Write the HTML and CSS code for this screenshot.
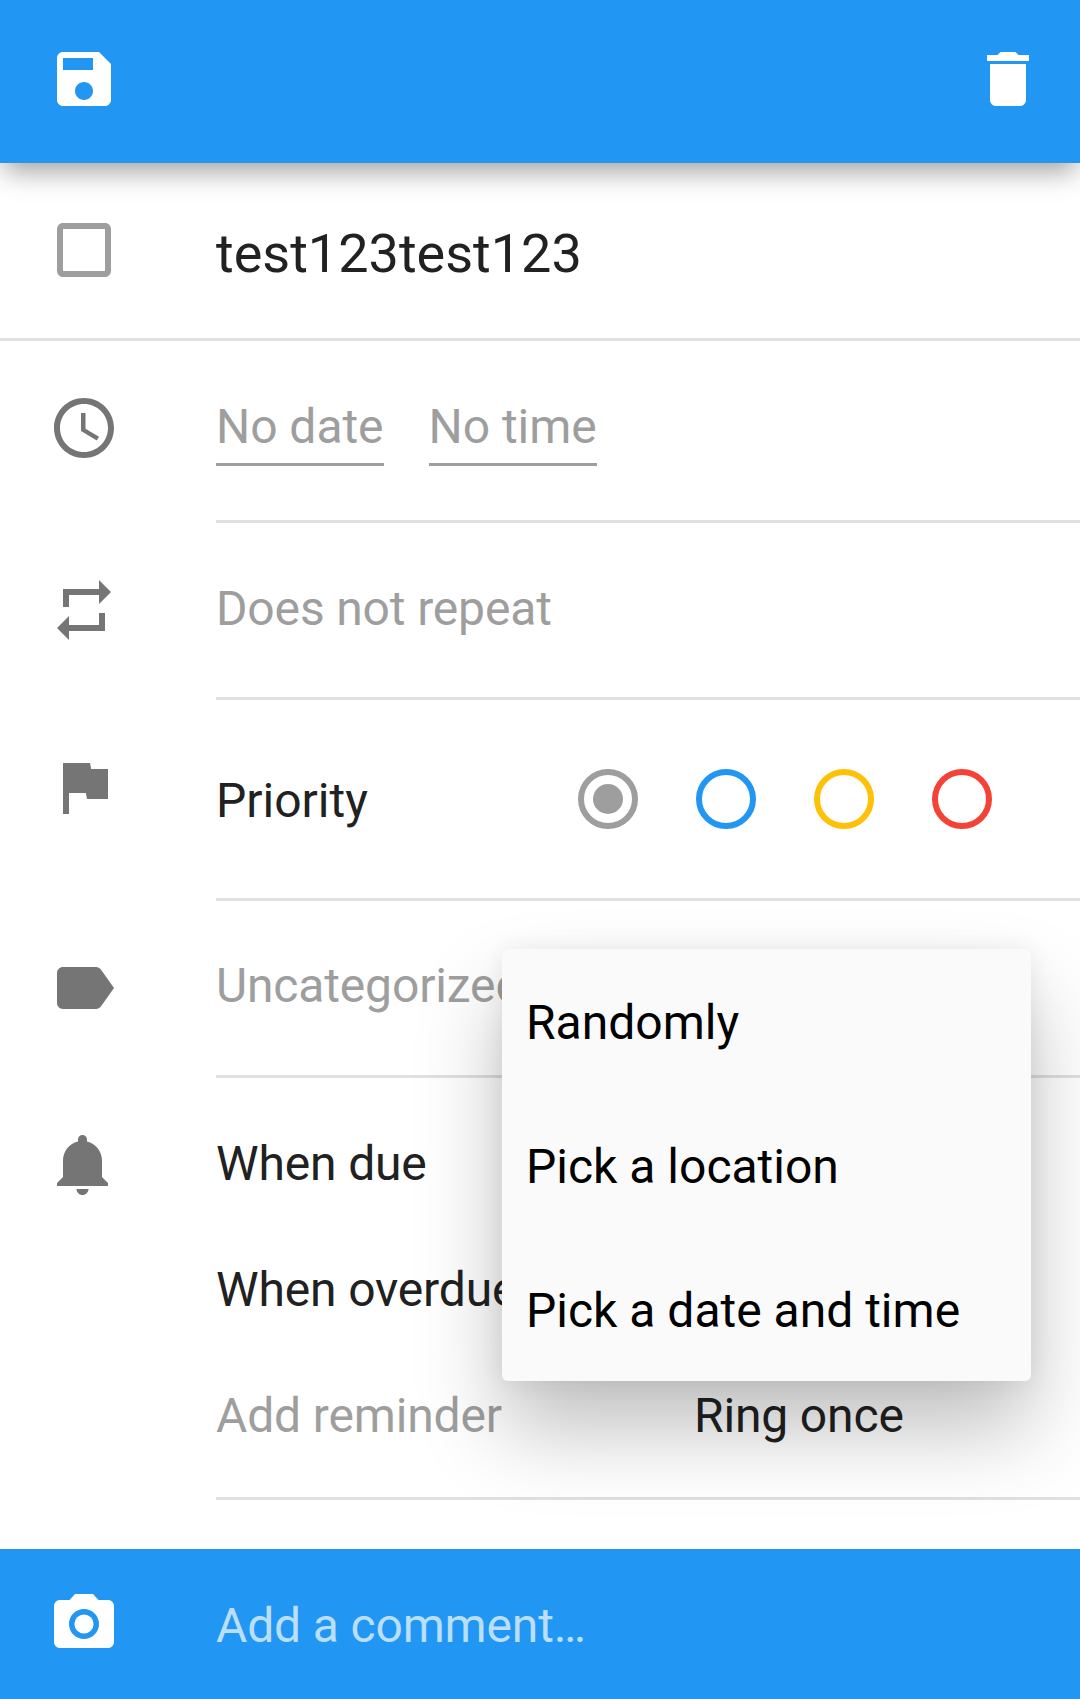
FILE: index.html
```html
<!DOCTYPE html>
<html lang="en">
<head>
  <meta charset="UTF-8">
  <meta name="viewport" content="width=device-width, initial-scale=1.0">
  <title>Edit Task</title>
  <link rel="stylesheet" href="styles.css">
</head>
<body>
  <div class="screen">
    <header class="toolbar">
      <svg class="icon" viewBox="0 0 24 24"><path d="M17 3H5c-1.11 0-2 .9-2 2v14c0 1.1.89 2 2 2h14c1.1 0 2-.9 2-2V7l-4-4zm-5 16c-1.66 0-3-1.34-3-3s1.34-3 3-3 3 1.34 3 3-1.34 3-3 3zm3-10H5V5h10v4z"/></svg>
      <svg class="icon" viewBox="0 0 24 24"><path d="M6 19c0 1.1.9 2 2 2h8c1.1 0 2-.9 2-2V7H6v12zM19 4h-3.5l-1-1h-5l-1 1H5v2h14V4z"/></svg>
    </header>

    <main class="details">
      <section class="row row-title">
        <div class="row-icon">
          <svg class="icon icon-check" viewBox="0 0 24 24"><path d="M19 5v14H5V5h14m0-2H5c-1.1 0-2 .9-2 2v14c0 1.1.9 2 2 2h14c1.1 0 2-.9 2-2V5c0-1.1-.9-2-2-2z"/></svg>
        </div>
        <div class="row-body title-text">test123test123</div>
      </section>

      <section class="row row-date">
        <div class="row-icon">
          <svg class="icon" viewBox="0 0 24 24"><path d="M11.99 2C6.47 2 2 6.48 2 12s4.47 10 9.99 10C17.52 22 22 17.52 22 12S17.52 2 11.99 2zM12 20c-4.42 0-8-3.58-8-8s3.58-8 8-8 8 3.58 8 8-3.58 8-8 8zm.5-13H11v6l5.25 3.15.75-1.23-4.5-2.67z"/></svg>
        </div>
        <div class="row-body date-fields">
          <span class="date-field">No date</span>
          <span class="date-field">No time</span>
        </div>
      </section>

      <section class="row row-repeat">
        <div class="row-icon">
          <svg class="icon" viewBox="0 0 24 24"><path d="M7 7h10v3l4-4-4-4v3H5v6h2V7zm10 10H7v-3l-4 4 4 4v-3h12v-6h-2v4z"/></svg>
        </div>
        <div class="row-body hint">Does not repeat</div>
      </section>

      <section class="row row-priority">
        <div class="row-icon">
          <svg class="icon" viewBox="0 0 24 24"><path d="M14.4 6L14 4H5v17h2v-7h5.6l.4 2h7V6z"/></svg>
        </div>
        <div class="row-body priority">
          <span class="priority-label">Priority</span>
          <div class="priority-options">
            <span class="radio radio-none"></span>
            <span class="radio radio-low"></span>
            <span class="radio radio-medium"></span>
            <span class="radio radio-high"></span>
          </div>
        </div>
      </section>

      <section class="row row-tags">
        <div class="row-icon">
          <svg class="icon" viewBox="0 0 24 24"><path d="M17.63 5.84C17.27 5.33 16.67 5 16 5L5 5.01C3.9 5.01 3 5.9 3 7v10c0 1.1.9 1.99 2 1.99L16 19c.67 0 1.27-.33 1.63-.84L22 12l-4.37-6.16z"/></svg>
        </div>
        <div class="row-body hint">Uncategorized</div>
      </section>

      <section class="row row-reminders">
        <div class="row-icon">
          <svg class="icon" viewBox="0 0 24 24"><path d="M11.5 22c1.1 0 2-.9 2-2h-4c0 1.1.9 2 2 2zm6.5-6v-5.5c0-3.07-2.13-5.64-5-6.32V3.5c0-.83-.67-1.5-1.5-1.5S10 2.67 10 3.5v.68c-2.87.68-5 3.25-5 6.32V16l-2 2v1h17v-1l-2-2z"/></svg>
        </div>
        <div class="row-body reminders">
          <div class="reminder">When due</div>
          <div class="reminder">When overdue</div>
          <div class="reminder">
            <span class="reminder-add hint">Add reminder</span>
            <span>Ring once</span>
          </div>
        </div>
      </section>

      <ul class="menu">
        <li>Randomly</li>
        <li>Pick a location</li>
        <li>Pick a date and time</li>
      </ul>
    </main>

    <footer class="comment-bar">
      <div class="row-icon">
        <svg class="icon" viewBox="0 0 24 24"><path d="M9 2L7.17 4H4c-1.1 0-2 .9-2 2v12c0 1.1.9 2 2 2h16c1.1 0 2-.9 2-2V6c0-1.1-.9-2-2-2h-3.17L15 2H9zm3 15c-2.76 0-5-2.24-5-5s2.24-5 5-5 5 2.24 5 5-2.24 5-5 5z"/><circle cx="12" cy="12" r="3.2"/></svg>
      </div>
      <span class="comment-hint">Add a comment…</span>
    </footer>
  </div>
</body>
</html>
```

FILE: styles.css
```css
* {
  box-sizing: border-box;
}
body {
  margin: 0;
  background-color: #fff;
  color: #212121;
  font-family: Roboto, sans-serif;
  font-size: 48px;
  letter-spacing: -0.15px;
}
.screen {
  display: flex;
  flex-direction: column;
  height: 1699px;
  overflow: hidden;
}
.icon {
  display: block;
  width: 72px;
  height: 72px;
  fill: #757575;
}
.toolbar {
  position: relative;
  z-index: 2;
  display: flex;
  justify-content: space-between;
  height: 163px;
  padding: 43px 36px 0 48px;
  background-color: #2196f3;
  box-shadow: 0 12px 26px -4px rgba(0, 0, 0, 0.38);
}
.toolbar .icon {
  fill: #fff;
}
.details {
  position: relative;
  flex: 1;
}
.row {
  display: flex;
}
.row-icon {
  flex: none;
  width: 216px;
  padding: 51px 0 0 48px;
}
.row-body {
  flex: 1;
  display: flex;
  align-items: flex-start;
  padding-top: 57px;
  border-bottom: 3px solid #e0e0e0;
}
.hint {
  color: #9e9e9e;
}

/* rows */
.row-title {
  height: 178px;
  border-bottom: 3px solid #e0e0e0;
}
.row-title .row-body {
  padding-top: 59px;
  border-bottom: none;
}
.icon-check {
  fill: #9e9e9e;
}
.title-text {
  font-size: 54px;
  letter-spacing: 0;
}
.row-date {
  height: 182px;
}
.date-fields {
  gap: 45px;
}
.date-field {
  padding-bottom: 8px;
  color: #9e9e9e;
  border-bottom: 3px solid #9e9e9e;
  letter-spacing: -0.05px;
}
.row-repeat {
  height: 177px;
}
.row-priority {
  height: 201px;
}
.priority {
  justify-content: space-between;
  padding-top: 0;
  padding-right: 88px;
}
.priority-label {
  padding-top: 72px;
  letter-spacing: 0;
}
.priority-options {
  display: flex;
  gap: 58px;
  padding-top: 69px;
}
.radio {
  display: block;
  width: 60px;
  height: 60px;
  border: 6px solid;
  border-radius: 50%;
}
.radio-none {
  position: relative;
  border-color: #9e9e9e;
}
.radio-none::after {
  content: "";
  position: absolute;
  top: 9px;
  left: 9px;
  width: 30px;
  height: 30px;
  border-radius: 50%;
  background-color: #9e9e9e;
}
.radio-low {
  border-color: #2196f3;
}
.radio-medium {
  border-color: #ffc107;
}
.radio-high {
  border-color: #f44336;
}
.row-tags {
  height: 177px;
}
.row-tags .row-body {
  padding-top: 56px;
}
.row-reminders {
  height: 422px;
}
.reminders {
  flex-direction: column;
  align-items: stretch;
  padding-top: 21px;
}
.reminder {
  display: flex;
  height: 126px;
  padding-top: 36px;
}
.reminder-add {
  width: 478px;
}

/* popup */
.menu {
  position: absolute;
  top: 786px;
  left: 502px;
  width: 529px;
  margin: 0;
  padding: 0;
  list-style: none;
  background-color: #fafafa;
  border-radius: 6px;
  box-shadow: 0 48px 84px rgba(0, 0, 0, 0.25), 0 0 24px rgba(0, 0, 0, 0.07);
  color: #000;
  letter-spacing: 0;
}
.menu li {
  display: flex;
  align-items: center;
  height: 144px;
  padding: 2px 0 0 24px;
}

.comment-bar {
  display: flex;
  align-items: center;
  flex: none;
  height: 150px;
  background-color: #2196f3;
}
.comment-bar .row-icon {
  padding-top: 0;
}
.comment-bar .icon {
  fill: #fff;
}
.comment-hint {
  padding-top: 3px;
  color: #b9dffb;
}
```
